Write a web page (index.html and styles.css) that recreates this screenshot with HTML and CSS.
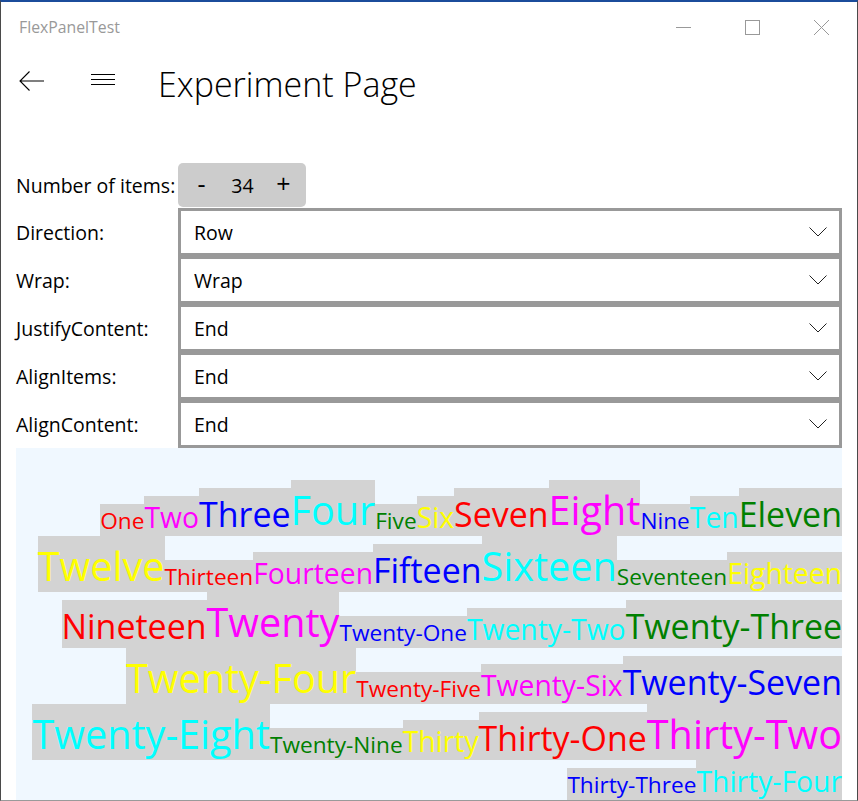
FILE: index.html
```html
<!DOCTYPE html>
<html lang="en">
<head>
<meta charset="utf-8">
<title>FlexPanelTest</title>
<link rel="stylesheet" href="styles.css">
</head>
<body>
<div class="window">
  <div class="titlebar">
    <span class="app-title">FlexPanelTest</span>
    <div class="caption">
      <button class="cap-btn" aria-label="Minimize">
        <svg width="15" height="15" viewBox="0 0 15 15"><path d="M0 7.5 H15" stroke="#999" stroke-width="1" fill="none"/></svg>
      </button>
      <button class="cap-btn" aria-label="Maximize">
        <svg width="15" height="15" viewBox="0 0 15 15"><rect x="0.5" y="0.5" width="14" height="14" stroke="#999" stroke-width="1" fill="none"/></svg>
      </button>
      <button class="cap-btn" aria-label="Close">
        <svg width="15" height="15" viewBox="0 0 15 15"><path d="M0 0 L15 15 M15 0 L0 15" stroke="#999" stroke-width="1" fill="none"/></svg>
      </button>
    </div>
  </div>

  <header class="header">
    <button class="nav-btn back" aria-label="Back">
      <svg width="25" height="20" viewBox="0 0 25 20"><path d="M1 10 H25 M10.5 0.5 L1 10 L10.5 19.5" stroke="#000" stroke-width="1.1" fill="none"/></svg>
    </button>
    <button class="nav-btn menu" aria-label="Menu">
      <svg width="24" height="11" viewBox="0 0 24 11"><path d="M0 0.5 H24 M0 5.5 H24 M0 10.5 H24" stroke="#000" stroke-width="1" fill="none"/></svg>
    </button>
    <h1 class="page-title">Experiment Page</h1>
  </header>

  <main class="content">
    <div class="form">
      <span class="field-label">Number of items:</span>
      <div class="stepper">
        <span class="step-cell sign">-</span>
        <span class="step-cell">34</span>
        <span class="step-cell sign">+</span>
      </div>

      <span class="field-label">Direction:</span>
      <div class="combo"><span class="combo-value">Row</span><svg class="chevron" width="18" height="10" viewBox="0 0 18 10"><path d="M0.5 0.5 L9 9 L17.5 0.5" stroke="#222" stroke-width="1" fill="none"/></svg></div>

      <span class="field-label">Wrap:</span>
      <div class="combo"><span class="combo-value">Wrap</span><svg class="chevron" width="18" height="10" viewBox="0 0 18 10"><path d="M0.5 0.5 L9 9 L17.5 0.5" stroke="#222" stroke-width="1" fill="none"/></svg></div>

      <span class="field-label">JustifyContent:</span>
      <div class="combo"><span class="combo-value">End</span><svg class="chevron" width="18" height="10" viewBox="0 0 18 10"><path d="M0.5 0.5 L9 9 L17.5 0.5" stroke="#222" stroke-width="1" fill="none"/></svg></div>

      <span class="field-label">AlignItems:</span>
      <div class="combo"><span class="combo-value">End</span><svg class="chevron" width="18" height="10" viewBox="0 0 18 10"><path d="M0.5 0.5 L9 9 L17.5 0.5" stroke="#222" stroke-width="1" fill="none"/></svg></div>

      <span class="field-label">AlignContent:</span>
      <div class="combo"><span class="combo-value">End</span><svg class="chevron" width="18" height="10" viewBox="0 0 18 10"><path d="M0.5 0.5 L9 9 L17.5 0.5" stroke="#222" stroke-width="1" fill="none"/></svg></div>
    </div>

    <div class="flex-panel">
      <div class="item">One</div>
      <div class="item">Two</div>
      <div class="item">Three</div>
      <div class="item">Four</div>
      <div class="item">Five</div>
      <div class="item">Six</div>
      <div class="item">Seven</div>
      <div class="item">Eight</div>
      <div class="item">Nine</div>
      <div class="item">Ten</div>
      <div class="item">Eleven</div>
      <div class="item">Twelve</div>
      <div class="item">Thirteen</div>
      <div class="item">Fourteen</div>
      <div class="item">Fifteen</div>
      <div class="item">Sixteen</div>
      <div class="item">Seventeen</div>
      <div class="item">Eighteen</div>
      <div class="item">Nineteen</div>
      <div class="item">Twenty</div>
      <div class="item">Twenty-One</div>
      <div class="item">Twenty-Two</div>
      <div class="item">Twenty-Three</div>
      <div class="item">Twenty-Four</div>
      <div class="item">Twenty-Five</div>
      <div class="item">Twenty-Six</div>
      <div class="item">Twenty-Seven</div>
      <div class="item">Twenty-Eight</div>
      <div class="item">Twenty-Nine</div>
      <div class="item">Thirty</div>
      <div class="item">Thirty-One</div>
      <div class="item">Thirty-Two</div>
      <div class="item">Thirty-Three</div>
      <div class="item">Thirty-Four</div>
    </div>
  </main>
</div>
</body>
</html>
```

FILE: styles.css
```css
html, body {
  margin: 0;
  padding: 0;
  background: #ffffff;
}

body {
  font-family: "Open Sans", "Noto Sans", sans-serif;
  color: #000;
}

.window {
  box-sizing: border-box;
  width: 858px;
  height: 801px;
  border-top: 2px solid #1b4c9b;
  border-left: 1px solid #4a4a4a;
  border-right: 1px solid #4a4a4a;
  border-bottom: 1px solid #9a9a9a;
  background: #fff;
  overflow: hidden;
  display: flex;
  flex-direction: column;
}

/* Title bar */
.titlebar {
  height: 50px;
  display: flex;
  align-items: center;
  justify-content: space-between;
  flex-shrink: 0;
}

.app-title {
  padding-left: 18px;
  font-size: 15.8px;
  color: #999;
}

.caption {
  display: flex;
  height: 100%;
  margin-right: 1px;
}

.cap-btn {
  width: 69px;
  height: 100%;
  border: 0;
  padding: 0;
  background: transparent;
  display: flex;
  align-items: center;
  justify-content: center;
}

.cap-btn svg {
  display: block;
}

/* Page header */
.header {
  height: 58px;
  display: flex;
  align-items: center;
  padding-left: 18px;
  flex-shrink: 0;
}

.nav-btn {
  border: 0;
  padding: 0;
  background: transparent;
  display: flex;
}

.nav-btn svg {
  display: block;
}

.menu {
  margin-left: 47px;
  margin-bottom: 3px;
}

.page-title {
  margin: 0 0 0 43px;
  padding-top: 6px;
  font-size: 34px;
  font-weight: 300;
  line-height: normal;
  color: #000;
}

/* Content */
.content {
  padding: 53px 15px 0 15px;
  flex: 1;
  display: flex;
  flex-direction: column;
}

.form {
  display: grid;
  grid-template-columns: 162px 1fr;
  grid-template-rows: 45px repeat(5, 48px);
  font-size: 19.5px;
}

.field-label {
  align-self: center;
  white-space: nowrap;
}

.stepper {
  box-sizing: border-box;
  width: 128px;
  height: 44px;
  background: #cccccc;
  border-radius: 5px;
  display: grid;
  grid-template-columns: repeat(3, 41px);
  padding-left: 3px;
  align-items: center;
}

.step-cell {
  text-align: center;
}

.step-cell.sign {
  font-size: 25px;
  line-height: 1;
  padding-bottom: 3px;
}

.combo {
  box-sizing: border-box;
  height: 48px;
  border: 3px solid #999999;
  background: #fff;
  display: flex;
  align-items: center;
  justify-content: space-between;
  padding: 0 12px 0 13px;
}

.chevron {
  display: block;
}

/* Flex panel */
.flex-panel {
  height: 352px;
  background: #f0f8ff;
  display: flex;
  flex-wrap: wrap;
  justify-content: flex-end;
  align-items: flex-end;
  align-content: flex-end;
  white-space: nowrap;
}

.item {
  box-sizing: border-box;
  background: #d3d3d3;
}

.item:nth-child(4n+1) {
  height: 32px;
  padding-top: 2px;
  font-size: 22.65px;
  line-height: 30px;
}

.item:nth-child(4n+2) {
  height: 40px;
  padding-top: 3px;
  font-size: 28.3px;
  line-height: 37px;
}

.item:nth-child(4n+3) {
  height: 48px;
  padding-top: 4px;
  font-size: 33.95px;
  line-height: 44px;
}

.item:nth-child(4n) {
  height: 56px;
  padding-top: 4px;
  font-size: 39.6px;
  line-height: 52px;
}

.item:nth-child(6n+1) { color: #ff0000; }
.item:nth-child(6n+2) { color: #ff00ff; }
.item:nth-child(6n+3) { color: #0000ff; }
.item:nth-child(6n+4) { color: #00ffff; }
.item:nth-child(6n+5) { color: #008000; }
.item:nth-child(6n)   { color: #ffff00; }
```
